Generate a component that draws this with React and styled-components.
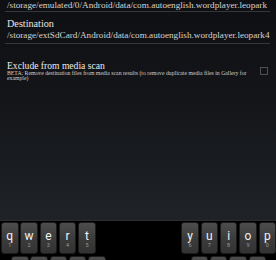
import styled, { createGlobalStyle } from "styled-components";

const GlobalStyle = createGlobalStyle`
  html, body {
    margin: 0;
    padding: 0;
    background: #000;
    overflow: hidden;
  }
`;

const rowOne = {
  left: [["q", "1"], ["w", "2"], ["e", "3"], ["r", "4"], ["t", "5"]],
  right: [["y", "6"], ["u", "7"], ["i", "8"], ["o", "9"], ["p", "0"]],
};

// second row only peeks in at the bottom edge, labels are below the fold
const rowTwo = {
  left: [["a"], ["s"], ["d"], ["f"], ["g"]],
  right: [["h"], ["j"], ["k"], ["l"]],
};

function KeyRow({ row, $pad, labels = true }) {
  const renderKey = ([ch, num]) => (
    <Key key={ch} aria-label={ch}>
      {labels && <Letter>{ch}</Letter>}
      {labels && num && <Digit>{num}</Digit>}
    </Key>
  );

  return (
    <Row $pad={$pad}>
      <KeyGroup>{row.left.map(renderKey)}</KeyGroup>
      <KeyGroup>{row.right.map(renderKey)}</KeyGroup>
    </Row>
  );
}

export default function App() {
  return (
    <>
      <GlobalStyle />
      <Screen>
        <Content>
          <PathField $bottom={1}>
            /storage/emulated/0/Android/data/com.autoenglish.wordplayer.leopark
          </PathField>
          <Label>Destination</Label>
          <PathField $bottom={3}>
            /storage/extSdCard/Android/data/com.autoenglish.wordplayer.leopark4
          </PathField>
          <OptionRow>
            <OptionText>
              <OptionTitle>Exclude from media scan</OptionTitle>
              <OptionHint>
                BETA: Remove destination files from media scan results (to
                remove duplicate media files in Gallery for example)
              </OptionHint>
            </OptionText>
            <CheckBox />
          </OptionRow>
        </Content>
        <Keyboard>
          <KeyRow row={rowOne} $pad="0 0 0 1px" />
          <KeyRow row={rowTwo} $pad="0 10px 0 11px" labels={false} />
        </Keyboard>
      </Screen>
    </>
  );
}

const Screen = styled.div`
  width: 276px;
  height: 260px;
  display: flex;
  flex-direction: column;
  overflow: hidden;
  font-family: "Liberation Serif", "DejaVu Serif", serif;
`;

const Content = styled.div`
  height: 221px;
  flex-shrink: 0;
  background: linear-gradient(180deg, #0e0f12 0%, #14161a 50%, #1f2226 100%);
  border-bottom: 1px solid #2a2d31;
  box-sizing: border-box;
  display: flex;
  flex-direction: column;
  padding: 0 6px 0 5px;
`;

const PathField = styled.div`
  font-size: 9.2px;
  line-height: 10px;
  color: #d4d4d4;
  white-space: nowrap;
  padding: 0 0 ${({ $bottom }) => $bottom}px 2px;
  border-bottom: 1px solid #34373b;
`;

const Label = styled.div`
  font-size: 10.2px;
  line-height: 12px;
  color: #e6e6e6;
  padding-left: 2px;
  margin-top: 6px;
`;

const OptionRow = styled.div`
  display: flex;
  align-items: flex-start;
  justify-content: space-between;
  margin-top: 16px;
  padding-left: 2px;
`;

const OptionText = styled.div`
  display: flex;
  flex-direction: column;
  width: 248px;
`;

const OptionTitle = styled.div`
  font-size: 9.6px;
  line-height: 11px;
  color: #ececec;
`;

const OptionHint = styled.div`
  font-size: 5.75px;
  line-height: 5.2px;
  color: #cfcfcf;
`;

const CheckBox = styled.div`
  width: 8px;
  height: 8px;
  border: 1px solid #4d4f52;
  box-sizing: border-box;
  margin-top: 7px;
  margin-right: 2px;
`;

const Keyboard = styled.div`
  flex: 1;
  background: #000;
  display: flex;
  flex-direction: column;
  gap: 2px;
  padding-top: 1px;
`;

const Row = styled.div`
  display: flex;
  justify-content: space-between;
  padding: ${({ $pad }) => $pad};
`;

const KeyGroup = styled.div`
  display: flex;
  gap: 1.8px;
`;

const Key = styled.div`
  width: 17.5px;
  height: 32px;
  flex-shrink: 0;
  box-sizing: border-box;
  border-radius: 3px;
  border: 1px solid #1c1c1c;
  background: linear-gradient(180deg, #4d4d4d 0%, #3c3c3c 50%, #323232 100%);
  display: flex;
  flex-direction: column;
  align-items: center;
  justify-content: center;
  font-family: "Roboto", "DejaVu Sans", sans-serif;
`;

const Letter = styled.span`
  font-size: 12px;
  line-height: 10px;
  color: #f2f2f2;
  margin-top: 2px;
`;

const Digit = styled.span`
  font-size: 5.5px;
  line-height: 6px;
  color: #9a9a9a;
  margin-top: 1px;
`;
